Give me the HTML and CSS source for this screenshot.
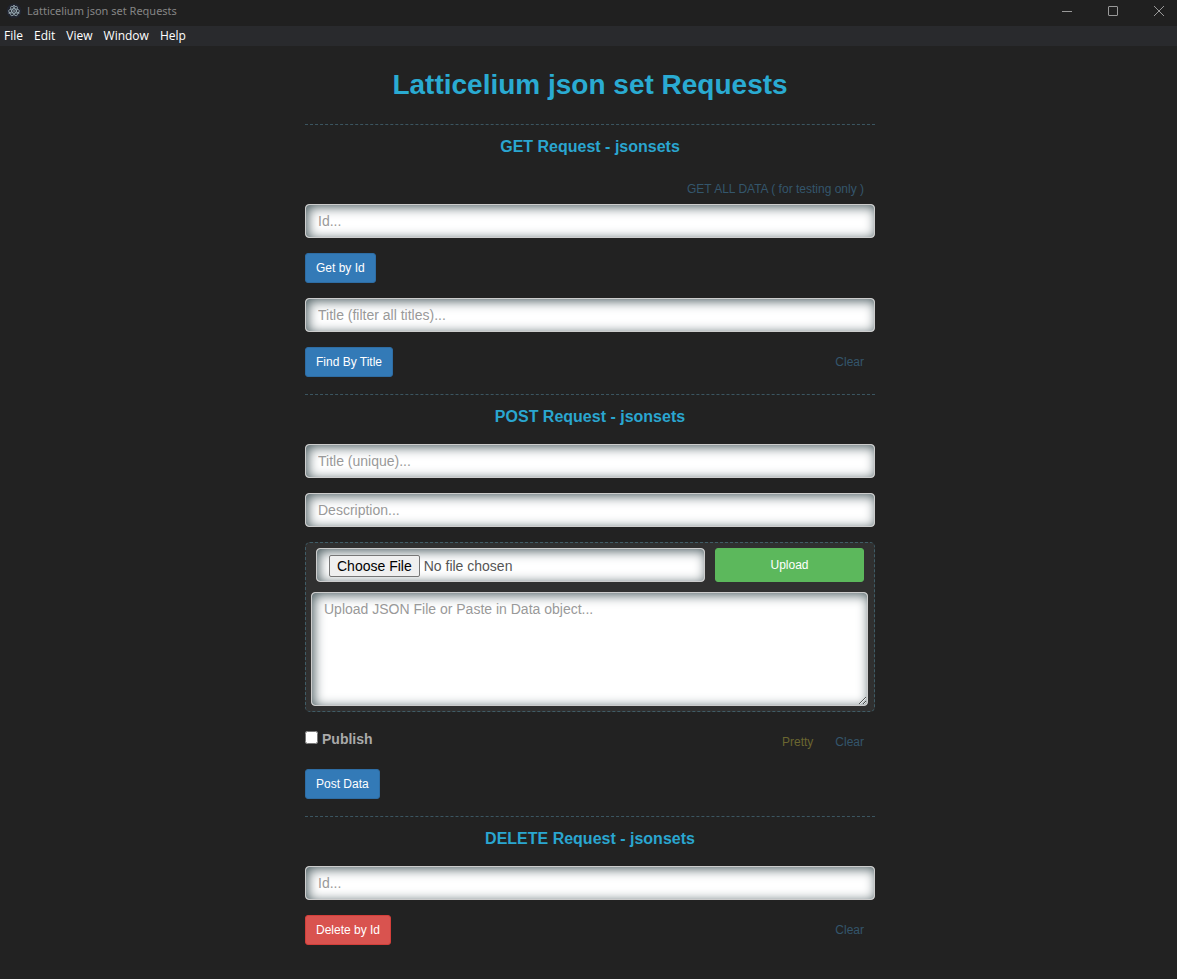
FILE: index.html
```html
<!DOCTYPE html>
<html lang="en">
<head>
<meta charset="utf-8">
<title>Latticelium json set Requests</title>
<link rel="stylesheet" href="styles.css">
</head>
<body>
<header class="titlebar">
  <svg class="app-icon" width="16" height="16" viewBox="0 0 16 16" fill="none" aria-hidden="true">
    <circle cx="8" cy="8" r="7.5" fill="#20242f"/>
    <g stroke="#a9bdc6" stroke-width=".7">
      <ellipse cx="8" cy="8" rx="5.4" ry="2.1"/>
      <ellipse cx="8" cy="8" rx="5.4" ry="2.1" transform="rotate(60 8 8)"/>
      <ellipse cx="8" cy="8" rx="5.4" ry="2.1" transform="rotate(120 8 8)"/>
    </g>
    <g fill="#b9cbd3"><circle cx="8" cy="8" r=".8"/><circle cx="3.3" cy="10" r=".8"/><circle cx="12.7" cy="10" r=".8"/><circle cx="8" cy="2.7" r=".8"/></g>
  </svg>
  <span class="window-title">Latticelium json set Requests</span>
  <div class="window-controls">
    <button type="button" class="window-button" aria-label="Minimize"><svg width="12" height="12" viewBox="0 0 12 12"><path d="M1 6.5h10"/></svg></button>
    <button type="button" class="window-button" aria-label="Maximize"><svg width="12" height="12" viewBox="0 0 12 12"><rect x="1.5" y="1.5" width="9" height="9" rx=".5"/></svg></button>
    <button type="button" class="window-button" aria-label="Close"><svg width="12" height="12" viewBox="0 0 12 12"><path d="M1 1l10 10M11 1L1 11"/></svg></button>
  </div>
</header>
<nav class="menubar">
  <button type="button" class="menu-item">File</button>
  <button type="button" class="menu-item">Edit</button>
  <button type="button" class="menu-item">View</button>
  <button type="button" class="menu-item">Window</button>
  <button type="button" class="menu-item">Help</button>
</nav>
<main class="container">
  <h1 class="page-title">Latticelium json set Requests</h1>

  <section class="request">
    <h2 class="request-title">GET Request - jsonsets</h2>
    <div class="actions actions-end">
      <button type="button" class="btn btn-link">GET ALL DATA ( for testing only )</button>
    </div>
    <form class="stack">
      <input class="field" type="text" placeholder="Id..." aria-label="Id">
      <div class="actions"><button type="button" class="btn btn-primary">Get by Id</button></div>
      <input class="field" type="text" placeholder="Title (filter all titles)..." aria-label="Title filter">
      <div class="actions">
        <button type="button" class="btn btn-primary">Find By Title</button>
        <button type="reset" class="btn btn-link">Clear</button>
      </div>
    </form>
  </section>

  <section class="request">
    <h2 class="request-title">POST Request - jsonsets</h2>
    <form class="stack">
      <input class="field" type="text" placeholder="Title (unique)..." aria-label="Title">
      <input class="field" type="text" placeholder="Description..." aria-label="Description">
      <div class="upload">
        <div class="upload-row">
          <input class="field file-field" type="file" aria-label="JSON file">
          <button type="button" class="btn btn-success">Upload</button>
        </div>
        <textarea class="field data-field" placeholder="Upload JSON File or Paste in Data object..." aria-label="Data object"></textarea>
      </div>
      <div class="post-footer">
        <div class="actions">
          <label class="check"><input class="check-box" type="checkbox">Publish</label>
          <div class="link-group">
            <button type="button" class="btn btn-link btn-pretty">Pretty</button>
            <button type="reset" class="btn btn-link">Clear</button>
          </div>
        </div>
        <div class="actions"><button type="button" class="btn btn-primary">Post Data</button></div>
      </div>
    </form>
  </section>

  <section class="request">
    <h2 class="request-title">DELETE Request - jsonsets</h2>
    <form class="stack">
      <input class="field" type="text" placeholder="Id..." aria-label="Id to delete">
      <div class="actions">
        <button type="button" class="btn btn-danger">Delete by Id</button>
        <button type="reset" class="btn btn-link">Clear</button>
      </div>
    </form>
  </section>
</main>
</body>
</html>
```
FILE: styles.css
```css
* { box-sizing: border-box; }

body {
  margin: 0;
  background: #222;
  color: #aaa;
  font: 14px/20px "Liberation Sans", Arial, sans-serif;
}

button, input, textarea { font-family: inherit; margin: 0; }

.titlebar {
  display: flex;
  align-items: center;
  height: 26px;
  padding: 0 0 5px 6px;
  gap: 5px;
  background: #202020;
}

.window-title {
  color: #858585;
  font: 11px/20px "Noto Sans", "Open Sans", sans-serif;
}

.window-controls { display: flex; margin-left: auto; }

.window-button {
  display: flex;
  align-items: center;
  justify-content: center;
  width: 46px;
  height: 20px;
  padding: 0 0 0 10px;
  border: 0;
  background: none;
}

.window-button svg { fill: none; stroke: #999; stroke-width: 1; }

.menubar {
  display: flex;
  gap: 11px;
  height: 20px;
  padding: 0 4px;
  background: #292a2d;
}

.menu-item {
  padding: 0;
  border: 0;
  background: none;
  color: #fff;
  font: 12px/20px "Open Sans", "Noto Sans", sans-serif;
}

.container {
  max-width: 603px;
  margin: 0 auto;
  padding: 21px 15px 33px 18px;
}

.page-title {
  margin: 0 0 22px;
  color: #2aabd2;
  font-size: 28px;
  line-height: 35px;
  text-align: center;
}

.request {
  padding: 12px 0 17px;
  border-top: 1px dashed #3b5560;
}

.request-title {
  margin: 0 0 18px;
  color: #2aa6d0;
  font-size: 16px;
  line-height: 19px;
  text-align: center;
}

.stack { display: flex; flex-direction: column; gap: 15px; }

.actions {
  display: flex;
  align-items: center;
  justify-content: space-between;
}

.actions-end { justify-content: flex-end; }

.btn {
  padding: 5px 10px;
  border: 1px solid transparent;
  border-radius: 3px;
  color: #fff;
  font-size: 12px;
  line-height: 18px;
  cursor: pointer;
}

.btn-primary { background: #337ab7; border-color: #2e6da4; }
.btn-success { background: #5cb85c; border-color: #5cb85c; }
.btn-danger { background: #d9534f; border-color: #d43f3a; }
.btn-link { background: none; color: #34566c; }
.btn-pretty { color: #6b6630; }

.field {
  display: block;
  width: 100%;
  height: 34px;
  padding: 6px 12px;
  border: 1px solid #ccc;
  border-radius: 4px;
  background: #fff;
  box-shadow: inset 2px 2px 12px #4b5c60;
  color: #555;
  font-size: 14px;
  line-height: 20px;
}

.field::placeholder { color: #999; opacity: 1; }

.upload {
  padding: 5px 6px 5px 5px;
  border: 1px dashed #3f5c66;
  border-radius: 5px;
  background: #303030;
}

.upload-row {
  display: grid;
  grid-template-columns: 389fr 149fr;
  gap: 10px;
  padding: 0 4px 10px 5px;
}

.file-field::file-selector-button {
  height: 22px;
  margin: 0 4px 0 0;
  padding: 1px 7px;
  border: 1px solid #767676;
  border-radius: 2px;
  background: #efefef;
  color: #000;
  font: 14px "Liberation Sans", Arial, sans-serif;
}

.data-field { height: 114px; resize: vertical; }

.post-footer { display: grid; gap: 12px; }

.check {
  display: flex;
  align-items: flex-start;
  gap: 4px;
  padding-bottom: 6px;
  font-weight: bold;
}

.check-box { width: 13px; height: 13px; margin-top: 2px; }

.link-group { display: flex; }
```
